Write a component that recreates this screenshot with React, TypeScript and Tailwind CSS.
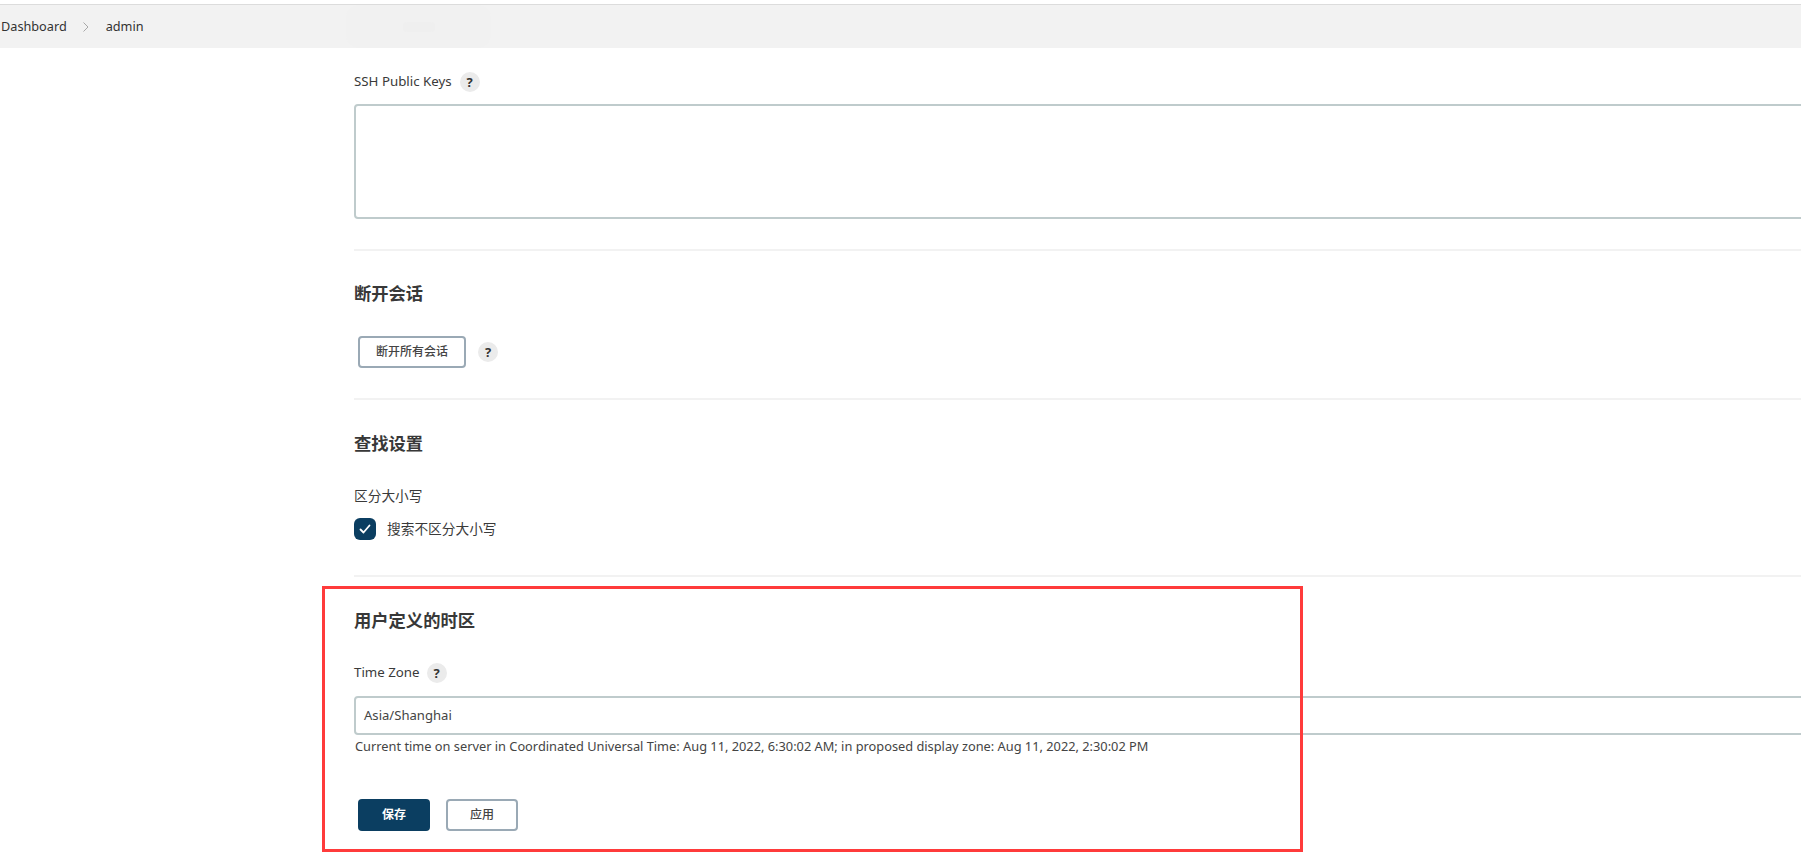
import React from "react";

const font = "font-['Noto_Sans','Noto_Sans_CJK_SC',sans-serif]";

function Help() {
  return (
    <span className="flex h-5 w-5 shrink-0 items-center justify-center rounded-full bg-[#ebebeb] text-[13px] font-bold leading-none text-[#333]">
      ?
    </span>
  );
}

function Separator() {
  return <div className="h-[2px] w-full bg-[#f2f2f2]" />;
}

function Heading({ children }: { children: React.ReactNode }) {
  return <h2 className="h-6 text-[17.3px] font-bold leading-6 text-[#383838]">{children}</h2>;
}

function OutlineButton({ children, width }: { children: React.ReactNode; width: string }) {
  return (
    <button className={`h-8 rounded-[4px] border-2 border-[#9aa9b5] bg-white text-[12px] font-medium leading-none text-[#444] ${width}`}>
      {children}
    </button>
  );
}

export default function App() {
  return (
    <div className={`h-[867px] w-[1801px] overflow-hidden bg-white ${font}`}>
      <div className="relative h-[867px] pt-1">
        <nav className="flex h-11 items-center border-t border-[#dcdcdc] bg-[#f2f2f2] pl-px text-[12.7px] text-[#333]">
          <span>Dashboard</span>
          <svg className="ml-[15px] mr-[16px] h-3 w-2" viewBox="0 0 8 12" fill="none" stroke="#a8a8a8" strokeWidth="1">
            <path d="M1.5 1.5 L6 6 L1.5 10.5" />
          </svg>
          <span>admin</span>
        </nav>
        <div className="pointer-events-none absolute left-[346px] top-[5px] flex h-[43px] w-[145px] items-center justify-center rounded-[14px] bg-[#f1f1f1]">
          <div className="h-[10px] w-[32px] rounded-[4px] bg-[#efefef]" />
        </div>

        <main className="overflow-hidden pl-[354px] text-[#3a3a3a]">
          <div className="mt-6 flex h-5 items-center gap-2 text-[13.3px]">
            <span>SSH Public Keys</span>
            <Help />
          </div>
          <div className="mt-3 h-[115px] w-[1500px] rounded-[4px] border-2 border-[#bfcbcc] bg-white" />
          <div className="mt-[30px]">
            <Separator />
          </div>

          <div className="mt-[31px]">
            <Heading>断开会话</Heading>
          </div>
          <div className="mt-[30px] flex items-center gap-3 pl-1">
            <OutlineButton width="w-[108px]">断开所有会话</OutlineButton>
            <Help />
          </div>
          <div className="mt-[30px]">
            <Separator />
          </div>

          <div className="mt-[32px]">
            <Heading>查找设置</Heading>
          </div>
          <div className="mt-[30px] h-5 text-[13.7px] leading-5">区分大小写</div>
          <label className="mt-3 flex h-[22px] items-center gap-[11px] text-[13.7px]">
            <span className="flex h-[22px] w-[22px] items-center justify-center rounded-[6px] bg-[#0b3e61]">
              <svg className="h-3 w-3" viewBox="0 0 12 12" fill="none" stroke="white" strokeWidth="1.8" strokeLinecap="round" strokeLinejoin="round">
                <path d="M1.5 6.5 L4.5 9.5 L10.5 2.5" />
              </svg>
            </span>
            <span>搜索不区分大小写</span>
          </label>
          <div className="mt-[35px]">
            <Separator />
          </div>

          <div className="mt-[32px]">
            <Heading>用户定义的时区</Heading>
          </div>
          <div className="mt-[30px] flex h-5 items-center gap-[7px] text-[13.3px]">
            <span>Time Zone</span>
            <Help />
          </div>
          <div className="mt-[13px] flex h-[39px] w-[1500px] items-center rounded-[4px] border-2 border-[#bfcbcc] bg-white pl-2 text-[13.1px] text-[#444]">
            Asia/Shanghai
          </div>
          <p className="mt-px h-5 pl-px text-[12.8px] leading-5 text-[#444]">
            Current time on server in Coordinated Universal Time: Aug 11, 2022, 6:30:02 AM; in proposed display zone: Aug 11, 2022, 2:30:02 PM
          </p>
          <div className="mt-[43px] flex gap-4 pl-1">
            <button className="h-8 w-[72px] rounded-[4px] bg-[#0b3e61] text-[12px] font-bold leading-none text-white">保存</button>
            <OutlineButton width="w-[72px]">应用</OutlineButton>
          </div>
        </main>

        <div className="pointer-events-none absolute left-[322px] top-[586px] h-[266px] w-[981px] border-[3px] border-[#ff3b3b]" />
      </div>
    </div>
  );
}
